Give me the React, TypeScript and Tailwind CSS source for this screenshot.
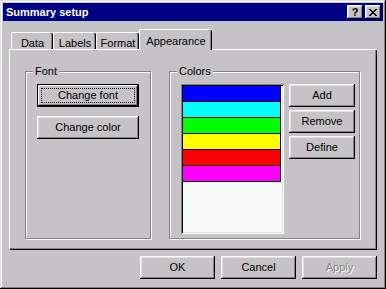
const btn =
  "flex items-center justify-center bg-[#c6c3c6] shadow-[inset_-1px_-1px_#000,inset_1px_1px_#fff,inset_-2px_-2px_#848284,inset_2px_2px_#dfdfdf]";

const defBtn =
  "flex items-center justify-center bg-[#c6c3c6] border border-black shadow-[inset_-1px_-1px_#000,inset_1px_1px_#fff,inset_-2px_-2px_#848284]";

function Tab({ label, width, active }: { label: string; width: string; active?: boolean }) {
  if (active) {
    return (
      <div
        className={`${width} relative z-10 -mb-px flex h-[21px] items-start justify-center rounded-tl-[2px] rounded-tr-[2px] border-l border-t border-white bg-[#c6c3c6] pt-[3px] shadow-[inset_-1px_0_#000,inset_-2px_0_#848284]`}
      >
        {label}
      </div>
    );
  }
  return (
    <div
      className={`${width} flex h-[17px] items-start justify-center rounded-tl-[2px] rounded-tr-[2px] border-l border-t border-white pt-[2px] shadow-[inset_-1px_0_#000,inset_-2px_0_#848284]`}
    >
      {label}
    </div>
  );
}

function GroupBox({
  title,
  className,
  children,
}: {
  title: string;
  className: string;
  children: React.ReactNode;
}) {
  return (
    <div
      className={`relative h-[168px] border border-[#848284] shadow-[inset_1px_1px_#fff,1px_1px_#fff] pl-[11px] pt-[12px] ${className}`}
    >
      <span className="absolute -top-[7px] left-[7px] bg-[#c6c3c6] px-[2px] leading-[13px]">{title}</span>
      {children}
    </div>
  );
}

const swatches = ["#0000ff", "#00ffff", "#00ff00", "#ffff00", "#ff0000", "#ff00ff"];

export default function App() {
  return (
    <div className="flex h-[289px] w-[386px] flex-col bg-[#c6c3c6] p-[3px] font-['Liberation_Sans',Arial,sans-serif] text-[11px] text-black shadow-[inset_-1px_-1px_#000,inset_1px_1px_#dfdfdf,inset_-2px_-2px_#848284,inset_2px_2px_#fff]">
      {/* title bar */}
      <div className="flex h-[18px] items-center justify-between bg-[#000084] pl-[3px] pr-[2px]">
        <span className="text-[11px] font-bold text-white">Summary setup</span>
        <div className="flex gap-[2px]">
          <div className={`${btn} h-[14px] w-[16px] text-[11px] font-bold leading-none`}>?</div>
          <div className={`${btn} h-[14px] w-[16px]`}>
            <svg width="8" height="7" viewBox="0 0 8 7" shapeRendering="crispEdges">
              <path d="M0 0h2v1H0zM6 0h2v1H6zM1 1h2v1H1zM5 1h2v1H5zM2 2h4v1H2zM3 3h2v1H3zM2 4h4v1H2zM1 5h2v1H1zM5 5h2v1H5zM0 6h2v1H0zM6 6h2v1H6z" fill="#000" />
            </svg>
          </div>
        </div>
      </div>

      <div className="flex flex-col px-[6px] pt-[8px]">
        {/* tabs */}
        <div className="flex h-[20px] items-end pl-[2px]">
          <Tab label="Data" width="w-[42px]" />
          <Tab label="Labels" width="w-[43px]" />
          <Tab label="Format" width="w-[43px]" />
          <Tab label="Appearance" width="w-[73px]" active />
        </div>

        {/* panel */}
        <div className="flex h-[201px] w-[368px] border-l border-t border-white pl-[15px] pt-[21px] shadow-[inset_-1px_-1px_#000,inset_-2px_-2px_#848284]">
          <GroupBox title="Font" className="w-[126px]">
            <div className="flex flex-col gap-[9px]">
              <div className={`${defBtn} h-[23px] w-[102px] p-[3px]`}>
                <div className="flex h-full w-full items-center justify-center border border-dotted border-black">
                  Change font
                </div>
              </div>
              <div className={`${btn} h-[23px] w-[102px]`}>Change color</div>
            </div>
          </GroupBox>

          <GroupBox title="Colors" className="ml-[18px] w-[191px]">
            <div className="flex">
              <div className="h-[150px] w-[103px] bg-[#f8fcf8] p-[2px] shadow-[inset_1px_1px_#848284,inset_-1px_-1px_#fff,inset_2px_2px_#000,inset_-2px_-2px_#dfdfdf]">
                <div className="flex flex-col">
                  {swatches.map((c) => (
                    <div key={c} className="h-[16px] w-[98px] border-b border-r border-black" style={{ backgroundColor: c }} />
                  ))}
                </div>
              </div>
              <div className="ml-[5px] flex flex-col gap-[3px]">
                <div className={`${btn} h-[23px] w-[66px]`}>Add</div>
                <div className={`${btn} h-[23px] w-[66px]`}>Remove</div>
                <div className={`${btn} h-[23px] w-[66px]`}>Define</div>
              </div>
            </div>
          </GroupBox>
        </div>

        {/* dialog buttons */}
        <div className="mt-[6px] flex justify-end gap-[6px]">
          <div className={`${btn} h-[23px] w-[75px]`}>OK</div>
          <div className={`${btn} h-[23px] w-[75px]`}>Cancel</div>
          <div className={`${btn} h-[23px] w-[75px] text-[#848284] [text-shadow:1px_1px_#fff]`}>Apply</div>
        </div>
      </div>
    </div>
  );
}
